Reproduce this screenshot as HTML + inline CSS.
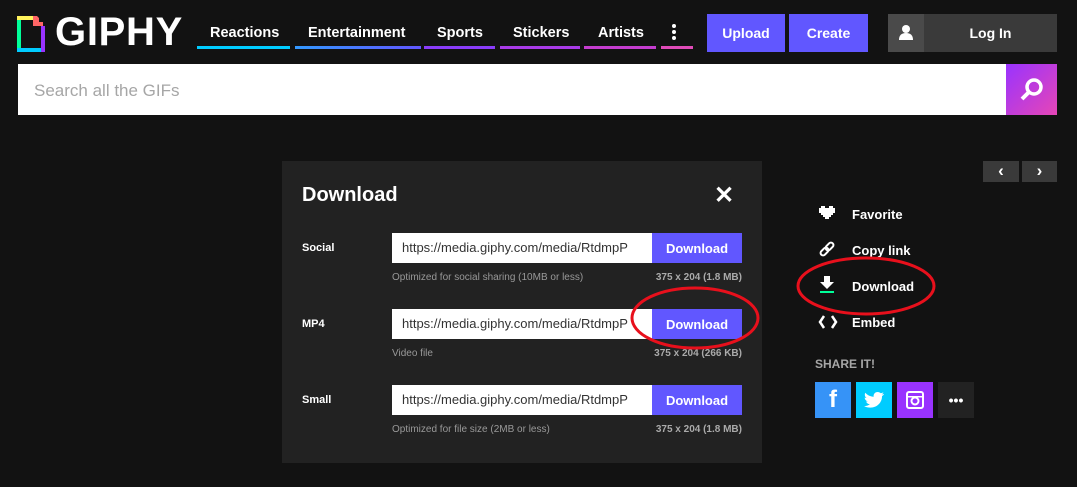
<!DOCTYPE html>
<html><head><meta charset="utf-8"><style>
*{box-sizing:border-box;margin:0;padding:0}
body{width:1077px;height:487px;background:#121212;font-family:"Liberation Sans",sans-serif;color:#fff;position:relative;overflow:hidden}
.a{position:absolute}
.nav{font-weight:bold;font-size:14.5px;top:25px}
.ul{height:3px;top:46px}
.btn{background:#6157ff;font-weight:bold;font-size:14px;display:flex;align-items:center;justify-content:center}
.lbl{font-size:11px;font-weight:bold;left:302px}
.inp{left:392px;width:260px;height:30px;background:#fff;color:#333;font-size:13px;padding:7px 0 0 10px;white-space:nowrap;overflow:hidden}
.db{left:652px;width:90px;height:30px;background:#6157ff;font-size:13px;font-weight:bold;display:flex;align-items:center;justify-content:center}
.sub{font-size:10px;color:#999}
.sz{font-size:10px;color:#aaa;font-weight:bold;right:335px}
.act{left:852px;font-size:13px;font-weight:bold}
.sh{top:382px;width:36px;height:36px;display:flex;align-items:center;justify-content:center;font-weight:bold}
</style></head><body>
<svg class="a" style="left:17px;top:16px" width="30" height="36" viewBox="0 0 30 36">
<rect x="0" y="0" width="4" height="36" fill="#00ff99"/><rect x="0" y="0" width="16" height="4" fill="#fff35c"/>
<rect x="0" y="32" width="28" height="4" fill="#00ccff"/><rect x="24" y="10" width="4" height="26" fill="#9933ff"/>
<polygon points="16,0 16,10 26,10 26,6 22,6 22,2 20,0" fill="#ff6666"/></svg>
<div class="a" style="left:55px;top:10px;font-size:40px;font-weight:900;letter-spacing:0.7px">GIPHY</div>
<div class="a nav" style="left:210px">Reactions</div>
<div class="a nav" style="left:308px">Entertainment</div>
<div class="a nav" style="left:437px">Sports</div>
<div class="a nav" style="left:513px">Stickers</div>
<div class="a nav" style="left:598px">Artists</div>
<div class="a" style="left:672px;top:24px;width:4px;height:4px;border-radius:2px;background:#fff;box-shadow:0 6px #fff,0 12px #fff"></div>
<div class="a ul" style="left:197px;width:93px;background:#00ccff"></div>
<div class="a ul" style="left:295px;width:126px;background:linear-gradient(90deg,#3399ff,#6157ff)"></div>
<div class="a ul" style="left:424px;width:71px;background:#8a3dfa"></div>
<div class="a ul" style="left:500px;width:80px;background:#a83be8"></div>
<div class="a ul" style="left:584px;width:72px;background:#c43dcf"></div>
<div class="a ul" style="left:661px;width:32px;background:#e04bb8"></div>
<div class="a btn" style="left:707px;top:14px;width:78px;height:38px">Upload</div>
<div class="a btn" style="left:789px;top:14px;width:79px;height:38px">Create</div>
<div class="a" style="left:888px;top:14px;width:36px;height:38px;background:#4a4a4a"></div>
<svg class="a" style="left:898px;top:24px" width="16" height="16" viewBox="0 0 16 16"><circle cx="8" cy="5" r="4" fill="#fff"/><path d="M1 16 Q1 9 8 9 Q15 9 15 16Z" fill="#fff"/></svg>
<div class="a" style="left:924px;top:14px;width:133px;height:38px;background:#3a3a3a;font-weight:bold;font-size:14px;display:flex;align-items:center;justify-content:center">Log In</div>
<div class="a" style="left:18px;top:64px;width:988px;height:51px;background:#fff;color:#a6a6a6;font-size:17px;padding:17px 0 0 16px">Search all the GIFs</div>
<div class="a" style="left:1006px;top:64px;width:51px;height:51px;background:linear-gradient(135deg,#9933ff,#e646b6)"></div>
<svg class="a" style="left:1019px;top:77px" width="26" height="26" viewBox="0 0 26 26"><circle cx="15" cy="10" r="7" stroke="#fff" stroke-width="3.5" fill="none"/><path d="M10 15 L3 22" stroke="#fff" stroke-width="4"/></svg>
<div class="a" style="left:983px;top:161px;width:36px;height:21px;background:#3a3a3a;font-weight:900;font-size:17px;text-align:center;line-height:20px">&lsaquo;</div>
<div class="a" style="left:1022px;top:161px;width:35px;height:21px;background:#3a3a3a;font-weight:900;font-size:17px;text-align:center;line-height:20px">&rsaquo;</div>
<div class="a" style="left:282px;top:161px;width:480px;height:302px;background:#222"></div>
<div class="a" style="left:302px;top:184px;font-size:20px;font-weight:900">Download</div>
<div class="a" style="left:714px;top:181px;font-size:24px;font-weight:bold">✕</div>
<div class="a lbl" style="top:242px">Social</div>
<div class="a inp" style="top:233px">https://media.giphy.com/media/RtdmpP</div>
<div class="a db" style="top:233px">Download</div>
<div class="a sub" style="left:392px;top:272px">Optimized for social sharing (10MB or less)</div>
<div class="a sz" style="top:272px">375 x 204 (1.8 MB)</div>
<div class="a lbl" style="top:318px">MP4</div>
<div class="a inp" style="top:309px">https://media.giphy.com/media/RtdmpP</div>
<div class="a db" style="top:309px">Download</div>
<div class="a sub" style="left:392px;top:348px">Video file</div>
<div class="a sz" style="top:348px">375 x 204 (266 KB)</div>
<div class="a lbl" style="top:394px">Small</div>
<div class="a inp" style="top:385px">https://media.giphy.com/media/RtdmpP</div>
<div class="a db" style="top:385px">Download</div>
<div class="a sub" style="left:392px;top:424px">Optimized for file size (2MB or less)</div>
<div class="a sz" style="top:424px">375 x 204 (1.8 MB)</div>
<svg class="a" style="left:819px;top:206px" width="16" height="14" viewBox="0 0 16 14"><path d="M2 0h4v2h4V0h4v2h2v5h-2v2h-2v2h-2v2H6v-2H4V9H2V7H0V2h2z" fill="#fff"/></svg>
<div class="a act" style="top:207px">Favorite</div>
<svg class="a" style="left:819px;top:241px" width="16" height="16" viewBox="0 0 16 16" fill="none" stroke="#fff" stroke-width="2"><rect x="1" y="8" width="9" height="5" rx="2.5" transform="rotate(-45 5.5 10.5)"/><rect x="6" y="3" width="9" height="5" rx="2.5" transform="rotate(-45 10.5 5.5)"/></svg>
<div class="a act" style="top:243px">Copy link</div>
<svg class="a" style="left:820px;top:276px" width="14" height="17" viewBox="0 0 14 17"><path d="M4 0h6v6h4l-7 7-7-7h4z" fill="#fff"/><rect x="0" y="15" width="14" height="2" fill="#00ff99"/></svg>
<div class="a act" style="top:279px">Download</div>
<svg class="a" style="left:818px;top:315px" width="20" height="14" viewBox="0 0 20 14" fill="none" stroke="#fff" stroke-width="2.5"><path d="M6 1L2 7l4 6M14 1l4 6-4 6"/></svg>
<div class="a act" style="top:315px">Embed</div>
<div class="a" style="left:815px;top:357px;font-size:12px;font-weight:bold;color:#a6a6a6">SHARE IT!</div>
<div class="a sh" style="left:815px;background:#3693f7;font-size:24px">f</div>
<div class="a sh" style="left:856px;background:#00ccff"><svg width="20" height="16" viewBox="0 0 20 16"><path d="M20 2c-.7.3-1.5.5-2.4.6.9-.5 1.5-1.3 1.8-2.3-.8.5-1.7.8-2.6 1C16 .5 14.9 0 13.7 0c-2.3 0-4.1 1.8-4.1 4.1 0 .3 0 .6.1.9C6.3 4.9 3.3 3.2 1.4.8c-.4.6-.6 1.3-.6 2.1 0 1.4.7 2.7 1.8 3.4-.7 0-1.3-.2-1.9-.5 0 2 1.4 3.7 3.300 4.1-.6.2-1.2.2-1.9.1.5 1.6 2 2.8 3.8 2.8C4.6 14.2 2.4 15 0 14.8 1.8 15.9 4 16.5 6.3 16.5c7.5 0 11.7-6.2 11.7-11.7v-.5c.8-.6 1.5-1.3 2-2.1z" fill="#fff" transform="scale(1 .95)"/></svg></div>
<div class="a sh" style="left:897px;background:#9933ff"><svg width="18" height="18" viewBox="0 0 18 18"><rect x="1" y="1" width="16" height="16" rx="2" fill="none" stroke="#fff" stroke-width="2"/><circle cx="9" cy="10" r="3.5" fill="none" stroke="#fff" stroke-width="2"/><rect x="1" y="5" width="16" height="1.5" fill="#fff"/></svg></div>
<div class="a sh" style="left:938px;background:#222;font-size:14px">•••</div>
<svg class="a" style="left:0;top:0" width="1077" height="487"><ellipse cx="866" cy="286" rx="68" ry="28" fill="none" stroke="#e8101c" stroke-width="3"/><ellipse cx="695" cy="318" rx="63" ry="30" fill="none" stroke="#e8101c" stroke-width="3"/></svg>
</body></html>
